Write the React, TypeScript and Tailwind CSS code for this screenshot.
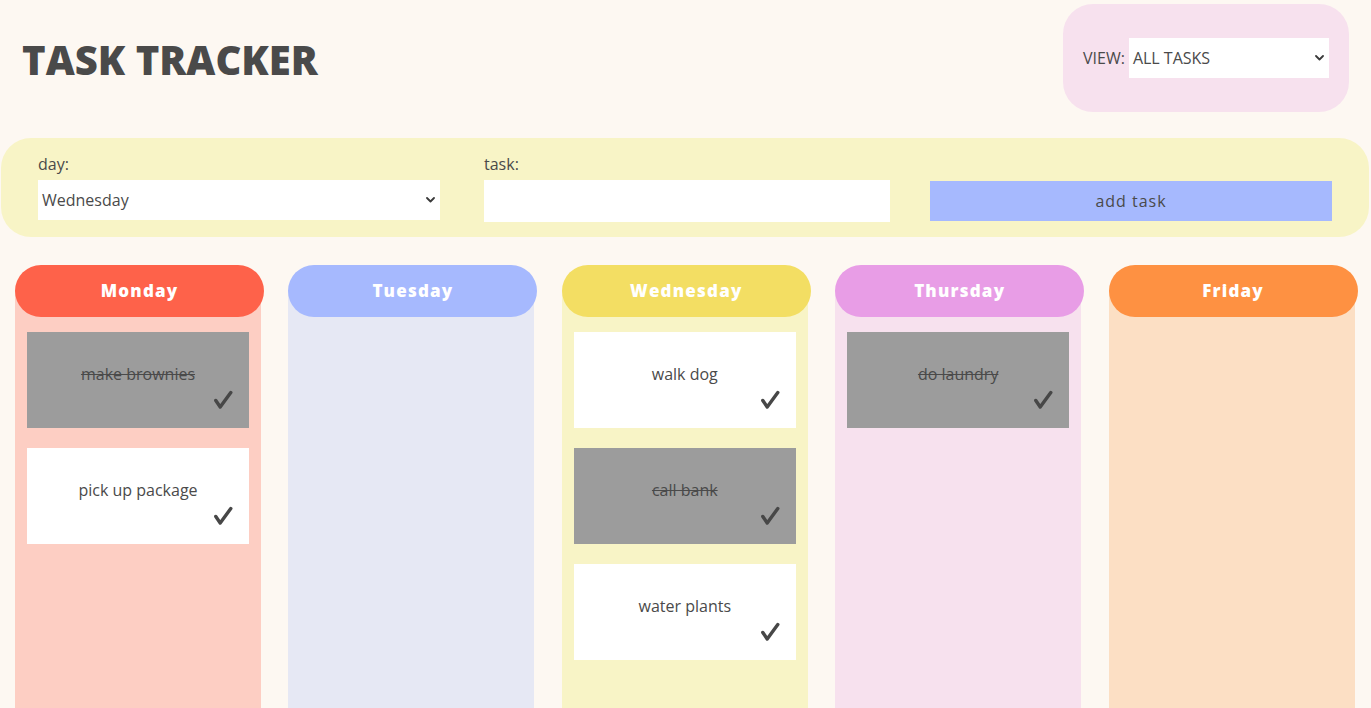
import React from "react";

type Task = { text: string; done: boolean };
type Day = { name: string; head: string; body: string; tasks: Task[] };

const days: Day[] = [
  {
    name: "Monday",
    head: "bg-[#fe624a]",
    body: "bg-[#fdcec3]",
    tasks: [
      { text: "make brownies", done: true },
      { text: "pick up package", done: false },
    ],
  },
  { name: "Tuesday", head: "bg-[#a6b9fe]", body: "bg-[#e6e8f4]", tasks: [] },
  {
    name: "Wednesday",
    head: "bg-[#f3de63]",
    body: "bg-[#f8f4c6]",
    tasks: [
      { text: "walk dog", done: false },
      { text: "call bank", done: true },
      { text: "water plants", done: false },
    ],
  },
  {
    name: "Thursday",
    head: "bg-[#e89de6]",
    body: "bg-[#f7e1ee]",
    tasks: [{ text: "do laundry", done: true }],
  },
  { name: "Friday", head: "bg-[#fe9142]", body: "bg-[#fcdfc4]", tasks: [] },
];

function Chevron() {
  return (
    <svg width="9" height="6" viewBox="0 0 9 6" className="shrink-0">
      <path d="M1 1 L4.5 4.5 L8 1" fill="none" stroke="#3a3a3a" strokeWidth="1.8" strokeLinecap="round" strokeLinejoin="round" />
    </svg>
  );
}

function Check() {
  return (
    <svg width="20" height="20" viewBox="0 0 20 20">
      <path d="M2.8 10.5 L7.2 17 L17.8 2.5" fill="none" stroke="#474747" strokeWidth="3.4" strokeLinecap="round" strokeLinejoin="round" />
    </svg>
  );
}

function TaskCard({ t }: { t: Task }) {
  return (
    <div className={`w-[222px] h-[96px] flex flex-col ${t.done ? "bg-[#9c9c9c]" : "bg-white"}`}>
      <div className={`pt-[30px] text-center text-[16px] leading-[24px] text-[#4a4a4a] ${t.done ? "line-through" : ""}`}>
        {t.text}
      </div>
      <div className="mt-auto flex justify-end pr-[16px] pb-[18px]">
        <Check />
      </div>
    </div>
  );
}

export default function App() {
  return (
    <div
      className="min-h-[708px] h-[708px] overflow-hidden bg-[#fdf8f2] text-[#4a4a4a]"
      style={{ fontFamily: '"Open Sans", "Liberation Sans", sans-serif' }}
    >
      <header className="flex items-center justify-between pt-[4px] pl-[22px] pr-[22px]">
        <h1 className="text-[40px] font-extrabold leading-[54px] mt-[3px] text-[#4a4a4a]">TASK TRACKER</h1>
        <div className="w-[286px] h-[108px] rounded-[30px] bg-[#f7e1ee] flex items-center pl-[20px] pr-[20px] gap-[4px]">
          <span className="text-[16px]">VIEW:</span>
          <div className="w-[200px] h-[40px] bg-white flex items-center justify-between pl-[4px] pr-[5px]">
            <span className="text-[16px]">ALL TASKS</span>
            <Chevron />
          </div>
        </div>
      </header>

      <section className="mt-[26px] ml-px mr-[2px] h-[99px] rounded-[30px] bg-[#f8f4c6] flex pl-[37px] pt-[14px]">
        <div className="w-[402px]">
          <div className="text-[16px] leading-[24px]">day:</div>
          <div className="mt-[4px] h-[40px] bg-white flex items-center justify-between pl-[4px] pr-[5px]">
            <span className="text-[16px]">Wednesday</span>
            <Chevron />
          </div>
        </div>
        <div className="w-[406px] ml-[44px]">
          <div className="text-[16px] leading-[24px]">task:</div>
          <div className="mt-[4px] h-[42px] bg-white" />
        </div>
        <div className="w-[402px] ml-[40px] pt-[29px]">
          <div className="h-[40px] bg-[#a6b9fe] flex items-center justify-center text-[16px] tracking-[1px]">
            add task
          </div>
        </div>
      </section>

      <main className="mt-[28px] flex pl-[15px] gap-[24.4px]">
        {days.map((d) => (
          <div key={d.name} className="w-[249px] flex flex-col">
            <div
              className={`relative z-10 h-[52px] rounded-full ${d.head} flex items-center justify-center text-white text-[17px] font-extrabold tracking-[1.2px]`}
            >
              {d.name}
            </div>
            <div className={`-mt-[26px] w-[246px] h-[500px] ${d.body} pt-[41px] flex flex-col items-center gap-[20px]`}>
              {d.tasks.map((t) => (
                <TaskCard key={t.text} t={t} />
              ))}
            </div>
          </div>
        ))}
      </main>
    </div>
  );
}
